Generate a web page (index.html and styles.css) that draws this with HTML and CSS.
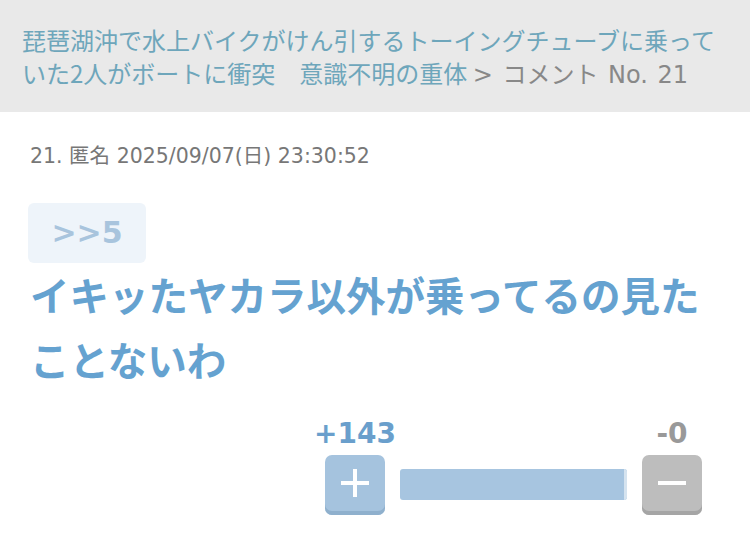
FILE: index.html
```html
<!DOCTYPE html>
<html lang="ja">
<head>
    <meta charset="UTF-8">
    <meta name="viewport" content="width=device-width, initial-scale=1.0">
    <title>コメント No. 21</title>
    <link rel="stylesheet" href="styles.css">
</head>
<body>
    <div class="topic-header">
        <a href="#" class="topic-link">琵琶湖沖で水上バイクがけん引するトーイングチューブに乗っていた2人がボートに衝突　意識不明の重体</a>
        <span class="crumb"> &gt; コメント No. 21</span>
    </div>

    <div class="comment">
        <div class="comment-meta">21. 匿名 2025/09/07(日) 23:30:52</div>
        <div class="anchor">&gt;&gt;5</div>
        <p class="comment-body">イキッたヤカラ以外が乗ってるの見たことないわ</p>

        <div class="vote">
            <div class="vote-col">
                <span class="count count-plus">+143</span>
                <button class="vote-btn btn-plus" aria-label="プラス">
                    <svg width="28" height="28" viewBox="0 0 28 28"><path d="M14 0v28M0 14h28" stroke="#fff" stroke-width="4"/></svg>
                </button>
            </div>
            <div class="bar"><div class="bar-fill" style="width: 100%"></div></div>
            <div class="vote-col">
                <span class="count count-minus">-0</span>
                <button class="vote-btn btn-minus" aria-label="マイナス">
                    <svg width="28" height="28" viewBox="0 0 28 28"><path d="M0 14h28" stroke="#fff" stroke-width="4"/></svg>
                </button>
            </div>
        </div>
    </div>
</body>
</html>
```

FILE: styles.css
```css
/* Global */
* {
    margin: 0;
    padding: 0;
    box-sizing: border-box;
}

body {
    font-family: "DejaVu Sans", "Noto Sans CJK JP", sans-serif;
    background-color: #fff;
    color: #333;
}

/* Topic header */
.topic-header {
    background-color: #e9e9e9;
    padding: 23px 22px 0 22px;
    font-family: "Noto Sans CJK JP", sans-serif;
    font-size: 24px;
    line-height: 33px;
    height: 112px;
    overflow: hidden;
}

.topic-link {
    color: #6ea6bb;
    text-decoration: none;
}

.crumb {
    color: #888;
    font-family: "DejaVu Sans", "Noto Sans CJK JP", sans-serif;
    word-spacing: 2px;
}

/* Comment */
.comment {
    padding: 30px 30px 0 28px;
}

.comment-meta {
    font-size: 20.5px;
    line-height: 28px;
    color: #777;
    padding-left: 2px;
}

.anchor {
    display: inline-block;
    margin-top: 33px;
    background-color: #eef4fa;
    color: #a8c4dd;
    font-weight: bold;
    font-size: 30px;
    line-height: 60px;
    width: 118px;
    text-align: center;
    border-radius: 6px;
}

.comment-body {
    margin-top: -2px;
    padding-left: 2px;
    font-family: "Noto Sans CJK JP", sans-serif;
    font-size: 39.5px;
    line-height: 65px;
    font-weight: bold;
    color: #65a2d0;
}

/* Vote */
.vote {
    display: flex;
    align-items: flex-end;
    justify-content: flex-end;
    gap: 15px;
    margin-top: 28px;
    padding-right: 18px;
}

.vote-col {
    width: 60px;
    display: flex;
    flex-direction: column;
    align-items: center;
}

.count {
    font-weight: bold;
    font-size: 28px;
    line-height: 30px;
    margin-bottom: 6px;
    white-space: nowrap;
}

.count-plus {
    color: #6a9fcc;
}

.count-minus {
    color: #999;
}

.vote-btn {
    width: 60px;
    height: 60px;
    border: none;
    border-radius: 7px;
    display: flex;
    align-items: center;
    justify-content: center;
    padding-bottom: 4px;
    cursor: pointer;
}

.btn-plus {
    background-color: #a5c3de;
    box-shadow: inset 0 -4px 0 #8fb0cd;
}

.btn-minus {
    background-color: #bdbdbd;
    box-shadow: inset 0 -4px 0 #a5a5a5;
}

.bar {
    width: 227px;
    height: 31px;
    margin-bottom: 15px;
    background-color: #dfe8f0;
    border-radius: 3px;
    overflow: hidden;
}

.bar-fill {
    height: 100%;
    background-color: #a7c5e0;
    border-right: 3px solid #d5e3ef;
}
```
